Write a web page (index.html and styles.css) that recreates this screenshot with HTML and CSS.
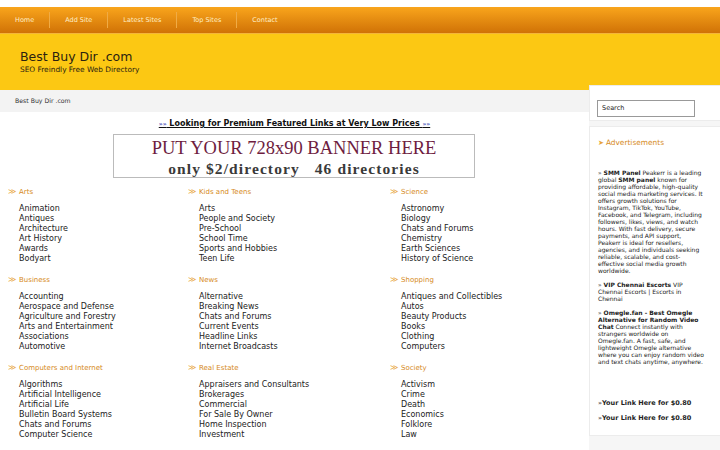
FILE: index.html
```html
<!DOCTYPE html>
<html lang="en">
<head>
    <meta charset="UTF-8">
    <title>Best Buy Dir .com</title>
    <link rel="stylesheet" href="styles.css">
</head>
<body>
    <div class="menu">
        <ul>
            <li><a href="#">Home</a></li>
            <li><a href="#">Add Site</a></li>
            <li><a href="#">Latest Sites</a></li>
            <li><a href="#">Top Sites</a></li>
            <li class="last"><a href="#">Contact</a></li>
        </ul>
    </div>
    <div class="header">
        <div class="logo">Best Buy Dir .com</div>
        <div class="slogan">SEO Freindly Free Web Directory</div>
    </div>
    <div class="page">
        <div class="main">
            <div class="crumbs">Best Buy Dir .com</div>
            <div class="promo"><a href="#"><span class="arr">&raquo;&raquo;</span> Looking for Premium Featured Links at Very Low Prices <span class="arr">&raquo;&raquo;</span></a></div>
            <div class="banner">
                <div class="big">PUT YOUR 728x90 BANNER HERE</div>
                <div class="small">only $2/directory&nbsp;&nbsp;&nbsp;46 directories</div>
            </div>
            <div class="cats">
                <div class="cat">
                    <h3><span class="ico">&#8811;</span>Arts</h3>
                    <a href="#">Animation</a>
                    <a href="#">Antiques</a>
                    <a href="#">Architecture</a>
                    <a href="#">Art History</a>
                    <a href="#">Awards</a>
                    <a href="#">Bodyart</a>
                </div>
                <div class="cat">
                    <h3><span class="ico">&#8811;</span>Kids and Teens</h3>
                    <a href="#">Arts</a>
                    <a href="#">People and Society</a>
                    <a href="#">Pre-School</a>
                    <a href="#">School Time</a>
                    <a href="#">Sports and Hobbies</a>
                    <a href="#">Teen Life</a>
                </div>
                <div class="cat">
                    <h3><span class="ico">&#8811;</span>Science</h3>
                    <a href="#">Astronomy</a>
                    <a href="#">Biology</a>
                    <a href="#">Chats and Forums</a>
                    <a href="#">Chemistry</a>
                    <a href="#">Earth Sciences</a>
                    <a href="#">History of Science</a>
                </div>
                <div class="cat">
                    <h3><span class="ico">&#8811;</span>Business</h3>
                    <a href="#">Accounting</a>
                    <a href="#">Aerospace and Defense</a>
                    <a href="#">Agriculture and Forestry</a>
                    <a href="#">Arts and Entertainment</a>
                    <a href="#">Associations</a>
                    <a href="#">Automotive</a>
                </div>
                <div class="cat">
                    <h3><span class="ico">&#8811;</span>News</h3>
                    <a href="#">Alternative</a>
                    <a href="#">Breaking News</a>
                    <a href="#">Chats and Forums</a>
                    <a href="#">Current Events</a>
                    <a href="#">Headline Links</a>
                    <a href="#">Internet Broadcasts</a>
                </div>
                <div class="cat">
                    <h3><span class="ico">&#8811;</span>Shopping</h3>
                    <a href="#">Antiques and Collectibles</a>
                    <a href="#">Autos</a>
                    <a href="#">Beauty Products</a>
                    <a href="#">Books</a>
                    <a href="#">Clothing</a>
                    <a href="#">Computers</a>
                </div>
                <div class="cat">
                    <h3><span class="ico">&#8811;</span>Computers and Internet</h3>
                    <a href="#">Algorithms</a>
                    <a href="#">Artificial Intelligence</a>
                    <a href="#">Artificial Life</a>
                    <a href="#">Bulletin Board Systems</a>
                    <a href="#">Chats and Forums</a>
                    <a href="#">Computer Science</a>
                </div>
                <div class="cat">
                    <h3><span class="ico">&#8811;</span>Real Estate</h3>
                    <a href="#">Appraisers and Consultants</a>
                    <a href="#">Brokerages</a>
                    <a href="#">Commercial</a>
                    <a href="#">For Sale By Owner</a>
                    <a href="#">Home Inspection</a>
                    <a href="#">Investment</a>
                </div>
                <div class="cat">
                    <h3><span class="ico">&#8811;</span>Society</h3>
                    <a href="#">Activism</a>
                    <a href="#">Crime</a>
                    <a href="#">Death</a>
                    <a href="#">Economics</a>
                    <a href="#">Folklore</a>
                    <a href="#">Law</a>
                </div>
            </div>
        </div>
        <div class="sidebar">
            <div class="box search">
                <input type="text" value="Search">
            </div>
            <div class="box ads">
                <h4><span class="tri">&#10148;</span>Advertisements</h4>
                <p>&raquo; <b>SMM Panel</b> Peakerr is a leading global <b>SMM panel</b> known for providing affordable, high-quality social media marketing services. It offers growth solutions for Instagram, TikTok, YouTube, Facebook, and Telegram, including followers, likes, views, and watch hours. With fast delivery, secure payments, and API support, Peakerr is ideal for resellers, agencies, and individuals seeking reliable, scalable, and cost-effective social media growth worldwide.</p>
                <p>&raquo; <b>VIP Chennai Escorts</b> VIP Chennai Escorts | Escorts in Chennai</p>
                <p>&raquo; <b>Omegle.fan - Best Omegle Alternative for Random Video Chat</b> Connect instantly with strangers worldwide on Omegle.fan. A fast, safe, and lightweight Omegle alternative where you can enjoy random video and text chats anytime, anywhere.</p>
                <p class="buy">&raquo;<b>Your Link Here for $0.80</b></p>
                <p class="buy2">&raquo;<b>Your Link Here for $0.80</b></p>
            </div>
        </div>
    </div>
</body>
</html>
```

FILE: styles.css
```css
body {
  margin: 0;
  font-family: "DejaVu Sans", Verdana, sans-serif;
  color: #222;
  background: #fff;
}
a {
  color: #222;
  text-decoration: none;
}
.menu {
  margin-top: 7px;
  height: 26px;
  background: linear-gradient(#f9a51c, #d07206);
  border-bottom: 1px solid #f4b53a;
}
.menu ul {
  list-style: none;
  margin: 0;
  padding: 0;
  display: flex;
  height: 100%;
}
.menu li {
  display: flex;
  align-items: center;
  padding: 0 15px;
  border-right: 1px solid #f0ab45;
  margin: 5px 0;
}
.menu li.last {
  border-right: 0;
}
.menu a {
  font-size: 6.5px;
  color: #ffefc8;
}
.header {
  height: 56px;
  background: #fcc813;
  padding-left: 20px;
  box-sizing: border-box;
  padding-top: 15px;
}
.logo {
  font-size: 12.5px;
  color: #2a2210;
  line-height: 16px;
}
.slogan {
  font-size: 7.4px;
  color: #2a2210;
  line-height: 9px;
}
.page {
  display: flex;
}
.main {
  width: 589px;
  flex: none;
}
.crumbs {
  height: 22px;
  line-height: 22px;
  background: #f3f3f3;
  padding-left: 15px;
  font-size: 6.2px;
  color: #333;
}
.promo {
  text-align: center;
  margin-top: 7px;
  font-size: 8px;
  font-weight: bold;
}
.promo a {
  text-decoration: underline;
  color: #111;
}
.promo .arr {
  color: #3340b0;
  font-size: 6px;
}
.banner {
  width: 360px;
  height: 42px;
  margin: 6px 0 0 113px;
  border: 1px solid #bbb;
  text-align: center;
  font-family: "Liberation Serif", "Times New Roman", serif;
}
.banner .big {
  font-size: 18.5px;
  color: #6e1d3f;
  line-height: 21px;
  margin-top: 3px;
}
.banner .small {
  font-size: 15.5px;
  font-weight: bold;
  color: #3a3a3a;
  line-height: 17px;
  letter-spacing: 1.1px;
  margin-top: 1px;
}
.cats {
  display: grid;
  grid-template-columns: 180px 202px 1fr;
  padding: 9px 0 0 8px;
}
.cat {
  display: flex;
  flex-direction: column;
  padding-bottom: 11px;
}
.cat h3 {
  margin: 0 0 7px;
  font-size: 7px;
  font-weight: normal;
  color: #d68a22;
  line-height: 10px;
}
.cat .ico {
  display: inline-block;
  width: 11px;
  font-size: 8px;
  color: #e7a43a;
}
.cat a {
  font-size: 8px;
  line-height: 10px;
  margin-left: 11px;
}
.sidebar {
  width: 131px;
  flex: none;
  margin-top: -5px;
  background: #f6f6f6;
}
.box {
  background: #fff;
  border: 1px solid #ececec;
  border-right: 0;
}
.search {
  height: 36px;
  padding: 9px 0 0 7px;
  box-sizing: border-box;
}
.search input {
  width: 98px;
  height: 17px;
  box-sizing: border-box;
  border: 1px solid #999;
  font-family: "DejaVu Sans", sans-serif;
  font-size: 6.5px;
  padding: 0 4px;
  color: #222;
  outline: none;
}
.ads {
  margin-top: 5px;
  height: 310px;
  padding: 11px 16px 0 8px;
  box-sizing: border-box;
}
.ads h4 {
  margin: 0 0 21px;
  font-size: 7.4px;
  font-weight: normal;
  color: #d68a22;
  line-height: 9px;
}
.ads .tri {
  font-size: 7px;
  color: #e7a43a;
  margin-right: 2px;
}
.ads p {
  margin: 0 0 7px;
  font-size: 6px;
  line-height: 7px;
  color: #222;
}
.ads p.buy {
  margin-top: 34px;
  font-size: 6.5px;
  line-height: 8px;
}
.ads p.buy2 {
  margin-top: 5px;
  font-size: 6.5px;
  line-height: 8px;
}
```
